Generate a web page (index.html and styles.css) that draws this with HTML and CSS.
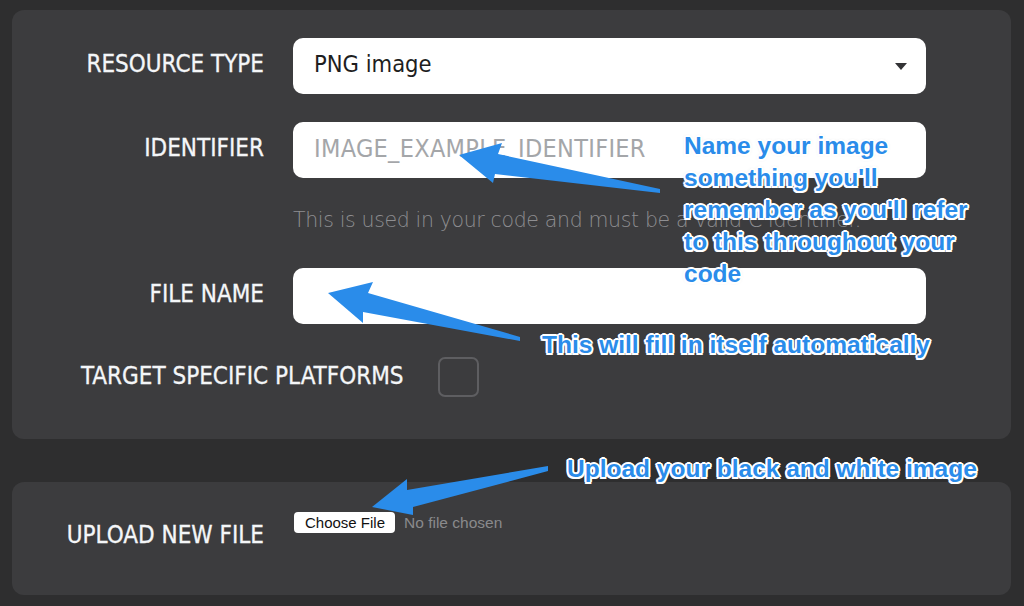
FILE: index.html
```html
<!DOCTYPE html>
<html lang="en">
<head>
<meta charset="utf-8">
<title>New resource</title>
<link rel="stylesheet" href="styles.css">
</head>
<body>
<div class="page">
  <section class="panel panel-main">
    <div class="row">
      <label class="label">RESOURCE TYPE</label>
      <div class="field select">
        <span class="value">PNG image</span>
        <span class="caret"></span>
      </div>
    </div>
    <div class="row row-gap">
      <label class="label">IDENTIFIER</label>
      <div class="field"><span class="placeholder">IMAGE_EXAMPLE_IDENTIFIER</span></div>
    </div>
    <p class="help">This is used in your code and must be a valid C identifier.</p>
    <div class="row">
      <label class="label">FILE NAME</label>
      <div class="field"></div>
    </div>
    <div class="check-row">
      <label class="label-inline">TARGET SPECIFIC PLATFORMS</label>
      <span class="checkbox"></span>
    </div>
  </section>

  <section class="panel panel-upload">
    <label class="label upload-label">UPLOAD NEW FILE</label>
    <div class="file">
      <span class="file-btn">Choose File</span>
      <span class="file-none">No file chosen</span>
    </div>
  </section>

  <svg class="arrows" width="1024" height="606" viewBox="0 0 1024 606">
    <polygon points="459,155 502,143 498,154 660,189 660,193 495,174 493,183"/>
    <polygon points="328,293 373,282 368,293 520,337 520,341 363,312 363,323"/>
    <polygon points="372,507 407,479 407,490 548,466 548,471 413,507 413,515"/>
  </svg>

  <div class="note note-1">Name your image<br>something you'll<br>remember as you'll refer<br>to this throughout your<br>code</div>
  <div class="note note-2">This will fill in itself automatically</div>
  <div class="note note-3">Upload your black and white image</div>
</div>
</body>
</html>
```

FILE: styles.css
```css
* { box-sizing: border-box; }

html, body {
  margin: 0;
  padding: 0;
}

body {
  width: 1024px;
  height: 606px;
  overflow: hidden;
  background: #2e2e2f;
  font-family: "DejaVu Sans Condensed", "DejaVu Sans", sans-serif;
}

.page {
  position: relative;
  width: 1024px;
  height: 606px;
  padding: 10px 13px 0 12px;
}

.panel {
  background: #3c3c3e;
  border-radius: 12px;
  width: 999px;
}

.panel-main {
  padding: 28px 85px 42px 0;
  display: flex;
  flex-direction: column;
}

.row {
  display: flex;
  align-items: center;
  gap: 29px;
}

.row-gap { margin-top: 28px; }

.label {
  width: 252px;
  flex: none;
  text-align: right;
  color: #f4f6f8;
  font-size: 24px;
  line-height: 30px;
  padding-bottom: 4px;
  -webkit-text-stroke: 0.3px #f4f6f8;
}

.field {
  flex: 1;
  height: 56px;
  background: #ffffff;
  border-radius: 10px;
  display: flex;
  align-items: center;
  padding: 0 21px 4px 21px;
  font-size: 23.5px;
  color: #1e1e1e;
}

.select { justify-content: space-between; }

.caret {
  width: 0;
  height: 0;
  border-left: 6px solid transparent;
  border-right: 6px solid transparent;
  border-top: 7px solid #333335;
  margin-right: -2px;
  margin-top: 4px;
}

.placeholder {
  color: #a4a6a9;
  font-size: 25px;
  letter-spacing: 0.3px;
}

.help {
  margin: 27px 0 33px 281px;
  font-family: "DejaVu Sans", sans-serif;
  font-weight: 200;
  font-size: 20.5px;
  letter-spacing: -0.35px;
  line-height: 30px;
  color: #8e8e91;
}

.check-row {
  display: flex;
  align-items: center;
  gap: 35px;
  margin-top: 33px;
  padding-left: 69px;
}

.label-inline {
  color: #f4f6f8;
  font-size: 24px;
  line-height: 30px;
  padding-bottom: 2px;
  -webkit-text-stroke: 0.3px #f4f6f8;
}

.checkbox {
  width: 41px;
  height: 40px;
  border: 2px solid #5e5e61;
  border-radius: 7px;
}

.panel-upload {
  margin-top: 43px;
  height: 113px;
  display: flex;
  align-items: flex-start;
  gap: 30px;
  padding-top: 30px;
}

.upload-label {
  padding-top: 8px;
}

.file {
  display: flex;
  align-items: center;
  gap: 9px;
  font-family: "Liberation Sans", Arial, sans-serif;
}

.file-btn {
  background: #ffffff;
  color: #111111;
  font-size: 15px;
  line-height: 21px;
  padding: 0 10px 0 11px;
  border-radius: 4px;
}

.file-none {
  color: #8a8a8c;
  font-size: 15.5px;
}

.arrows {
  position: absolute;
  left: 0;
  top: 0;
  pointer-events: none;
}

.arrows polygon { fill: #2a8cea; }

.note {
  position: absolute;
  font-family: "Liberation Sans", Arial, sans-serif;
  font-weight: bold;
  font-size: 24.5px;
  line-height: 32px;
  color: #2a8cea;
  white-space: nowrap;
  text-shadow:
    2px 0 0 #fff, -2px 0 0 #fff, 0 2px 0 #fff, 0 -2px 0 #fff,
    1.5px 1.5px 0 #fff, -1.5px 1.5px 0 #fff, 1.5px -1.5px 0 #fff, -1.5px -1.5px 0 #fff,
    0 0 3px rgba(150, 150, 150, 0.8);
}

.note-1 { left: 684px; top: 130px; }
.note-2 { left: 542px; top: 329px; }
.note-3 { left: 567px; top: 453px; }
```
